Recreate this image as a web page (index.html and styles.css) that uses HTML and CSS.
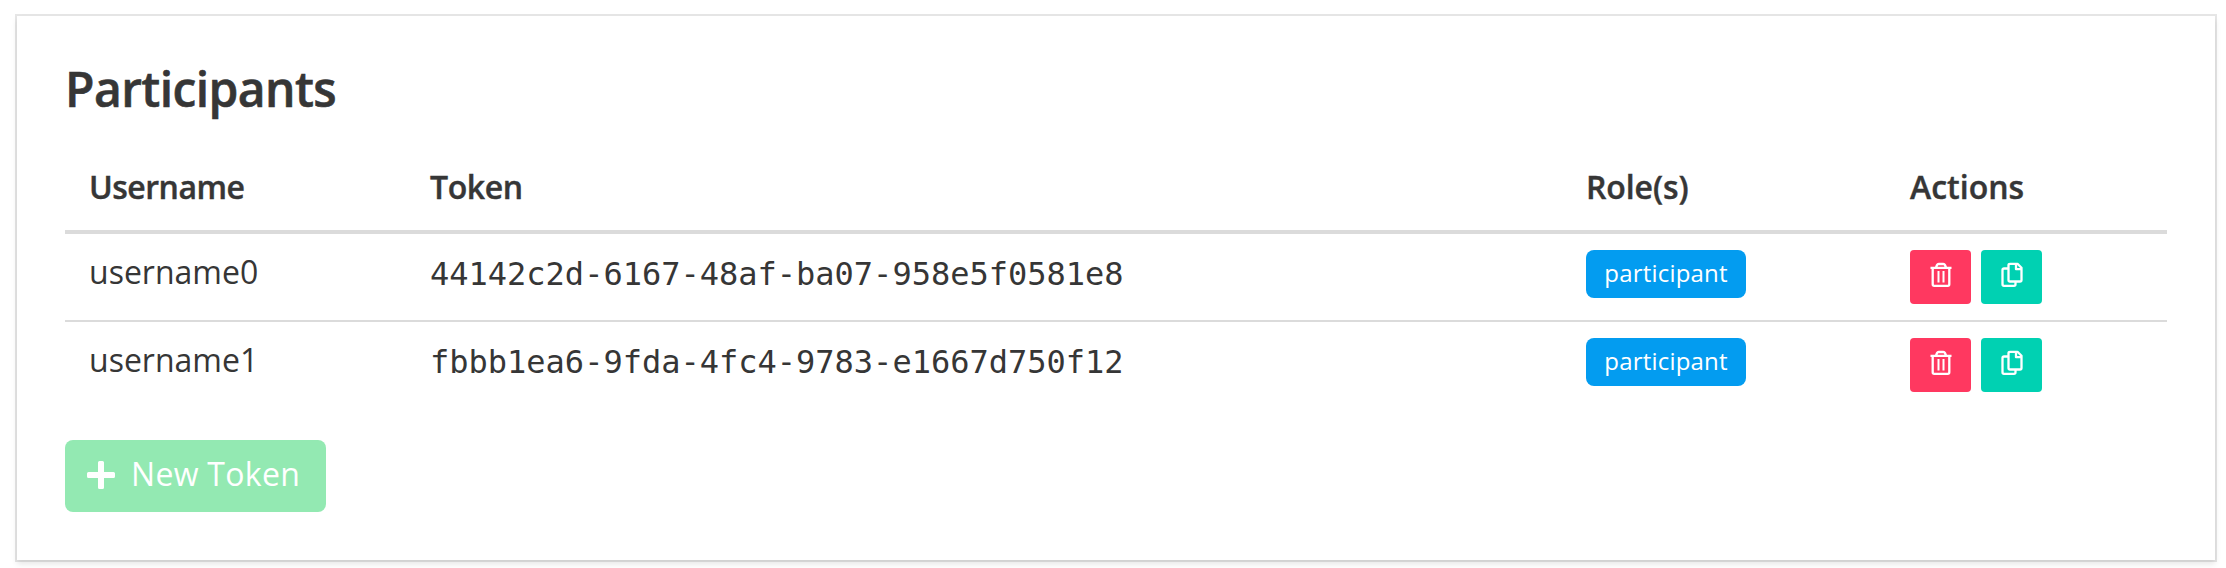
FILE: index.html
```html
<!DOCTYPE html>
<html lang="en">
<head>
<meta charset="utf-8">
<title>Participants</title>
<link rel="stylesheet" href="styles.css">
</head>
<body>
<svg class="sprite" aria-hidden="true">
  <symbol id="trash" viewBox="0 0 22 26" fill="none" stroke="currentColor" stroke-width="2.300">
    <path d="M0.500 5.800H21.500M6 5.500L7 3Q7.500 2 8.700 2H13.300Q14.500 2 15 3L16 5.500M2.700 6V22.300Q2.700 23.800 4.200 23.800H17.800Q19.300 23.800 19.300 22.300V6"/><path stroke-width="2" d="M8.500 9V20.500M13.500 9V20.500"/>
  </symbol>
  <symbol id="copy" viewBox="0 0 22 26" fill="none" stroke="currentColor" stroke-width="2.300" stroke-linejoin="round">
    <path d="M9 1.800H16.500L20.500 5.800V18Q20.500 19.500 19 19.500H9Q7.500 19.500 7.500 18V3.300Q7.500 1.800 9 1.800ZM15 2V7.200H20.500M7 6.500H3Q1.500 6.500 1.500 8V22.300Q1.500 23.800 3 23.800H13Q14.500 23.800 14.500 22.300V20"/>
  </symbol>
</svg>
<section class="box">
  <h1 class="title">Participants</h1>
  <table class="table">
    <colgroup><col class="col-user"><col class="col-token"><col class="col-role"><col></colgroup>
    <thead>
      <tr><th><span class="h-user">Username</span></th><th><span class="h-token">Token</span></th><th><span class="h-role">Role(s)</span></th><th><span class="h-actions">Actions</span></th></tr>
    </thead>
    <tbody>
      <tr>
        <td>username0</td>
        <td class="token">44142c2d-6167-48af-ba07-958e5f0581e8</td>
        <td><span class="tag">participant</span></td>
        <td><div class="buttons"><button class="button danger" aria-label="Delete"><svg class="icon"><use href="#trash"/></svg></button><button class="button primary" aria-label="Copy"><svg class="icon"><use href="#copy"/></svg></button></div></td>
      </tr>
      <tr>
        <td>username1</td>
        <td class="token">fbbb1ea6-9fda-4fc4-9783-e1667d750f12</td>
        <td><span class="tag">participant</span></td>
        <td><div class="buttons"><button class="button danger" aria-label="Delete"><svg class="icon"><use href="#trash"/></svg></button><button class="button primary" aria-label="Copy"><svg class="icon"><use href="#copy"/></svg></button></div></td>
      </tr>
    </tbody>
  </table>
  <button class="new-token"><svg class="plus" viewBox="0 0 28 28"><path fill="currentColor" d="M12.500 0h3Q17 0 17 1.500V11h9.500Q28 11 28 12.500v3Q28 17 26.500 17H17v9.500Q17 28 15.500 28h-3Q11 28 11 26.500V17H1.500Q0 17 0 15.500v-3Q0 11 1.500 11H11V1.500Q11 0 12.500 0Z"/></svg><span class="new-label">New Token</span></button>
</section>
</body>
</html>
```
FILE: styles.css
```css
* { box-sizing: border-box; }
body {
  margin: 0;
  padding: 16px 11px 8px 17px;
  height: 568px;
  overflow: hidden;
  background: #fff;
  color: #363636;
  font: 32px/48px "Open Sans", sans-serif;
}
.sprite { display: none; }
.box {
  height: 544px;
  padding: 46px 48px 40px;
  background: #fff;
  box-shadow: 0 4px 6px rgba(10, 10, 10, .1), 0 0 0 2px rgba(10, 10, 10, .1);
}
.title {
  margin: 0 0 34px;
  font-size: 48px;
  line-height: 54px;
  font-weight: 600;
  letter-spacing: -.6px;
  -webkit-text-stroke: .6px #363636;
}
.table {
  width: 100%;
  table-layout: fixed;
  border-collapse: separate;
  border-spacing: 0;
}
.col-user { width: 341px; }
.col-token { width: 1156px; }
.col-role { width: 324px; }
th {
  height: 84px;
  padding: 13px 24px 19px;
  border-bottom: 4px solid #dbdbdb;
  text-align: left;
  vertical-align: top;
  font-weight: 600;
  -webkit-text-stroke: .4px #363636;
}
.h-user { letter-spacing: -.500px; }
.h-token { letter-spacing: -.4px; }
.h-role { letter-spacing: -.1px; }
.h-actions { letter-spacing: 0; }
td {
  height: 86px;
  padding: 14px 24px;
  vertical-align: top;
}
tbody tr:not(:last-child) td { height: 88px; border-bottom: 2px solid #dbdbdb; }
.token { padding-top: 16px; font-family: "DejaVu Sans Mono", monospace; white-space: nowrap; }
.tag {
  display: flex;
  align-items: center;
  justify-content: center;
  width: 160px;
  height: 48px;
  margin-top: 2px;
  padding-bottom: 3px;
  border-radius: 8px;
  background: #039cf0;
  color: #fff;
  font-size: 24px;
  letter-spacing: .2px;
  line-height: 36px;
}
.buttons { display: flex; gap: 10px; padding-top: 2px; }
.button {
  display: flex;
  justify-content: center;
  width: 61px;
  height: 54px;
  padding: 12px 0 0;
  border: 0;
  border-radius: 4px;
  color: #fff;
}
.danger { background: #ff3860; }
.primary { background: #00d1b2; }
.icon { width: 22px; height: 26px; }
.new-token {
  display: flex;
  align-items: center;
  gap: 16px;
  width: 261px;
  height: 72px;
  margin-top: 32px;
  padding: 0 0 2px 22px;
  border: 0;
  border-radius: 8px;
  background: #93e9b2;
  color: #fff;
  font: 32px/48px "Open Sans", sans-serif;
  white-space: nowrap;
}
.plus { width: 28px; height: 28px; }
.new-label { padding-bottom: 2px; letter-spacing: .3px; }
```
